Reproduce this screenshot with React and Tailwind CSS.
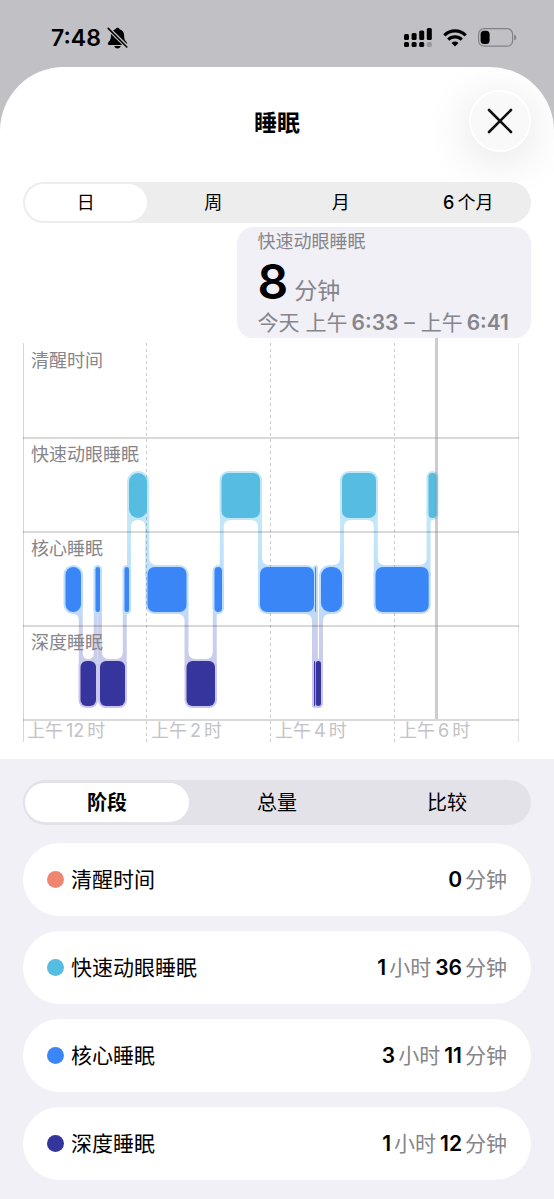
import { useState } from "react";
import clsx from "clsx";

const RANGES = ["日", "周", "月", "6个月"];
const VIEWS = ["阶段", "总量", "比较"];
const ROWS = ["清醒时间", "快速动眼睡眠", "核心睡眠", "深度睡眠"];
const HOURS = [12, 2, 4, 6];

const STAGES = {
  rem: { top: 135, bottom: 180, color: "#56bce1" },
  core: { top: 229, bottom: 274, color: "#3b86f7" },
  deep: { top: 323, bottom: 368, color: "#36349d" },
};

// [stage, start, end] along the 496 unit wide time axis
const SEGMENTS = [
  ["core", 42.5, 58],
  ["deep", 57.5, 73],
  ["core", 72.5, 77],
  ["deep", 77, 102],
  ["core", 101.5, 106],
  ["rem", 106, 124],
  ["core", 124.5, 163.5],
  ["deep", 163.5, 192],
  ["core", 191.5, 199],
  ["rem", 198.5, 237],
  ["core", 237, 291],
  ["deep", 291, 292],
  ["core", 292, 293],
  ["deep", 292.7, 298],
  ["core", 298, 319],
  ["rem", 319, 353],
  ["core", 352.5, 405.7],
  ["rem", 405.5, 413.5],
];

const SUMMARY = [
  { label: "清醒时间", dot: "bg-[#f08672]", value: [[0, "分钟"]] },
  { label: "快速动眼睡眠", dot: "bg-[#56bce1]", value: [[1, "小时"], [36, "分钟"]] },
  { label: "核心睡眠", dot: "bg-[#3b86f7]", value: [[3, "小时"], [11, "分钟"]] },
  { label: "深度睡眠", dot: "bg-[#36349d]", value: [[1, "小时"], [12, "分钟"]] },
];

function StatusBar() {
  return (
    <div className="flex h-[67px] items-center justify-between pt-2 pr-[37px] pl-[51px]">
      <div className="flex items-center gap-[6px]">
        <span className="text-[23px] leading-7 font-semibold">7:48</span>
        <svg width="21" height="22" viewBox="0 0 21 22" aria-hidden="true">
          <path d="M10.500.8c-1 0-1.800.6-2.100 1.500C5.500 3.200 3.900 5.500 3.900 8.500c0 3.600-.7 4.700-1.900 6.100-.8.9-1.100 1.400-1.100 2.100 0 .8.6 1.400 1.600 1.400h16c1 0 1.600-.6 1.600-1.400 0-.7-.3-1.200-1.100-2.100-1.200-1.400-1.900-2.500-1.900-6.100 0-3-1.600-5.300-4.500-6.200C12.300 1.400 11.500.8 10.500.8z" />
          <path d="M7.300 19h6.400c-.3 1.500-1.500 2.500-3.200 2.500S7.600 20.500 7.300 19z" />
          <path d="M1 1.200l19 18.600" stroke="#c1c0c5" strokeWidth="4" />
          <path d="M1.200 1.400l18.600 18.600" stroke="#000" strokeWidth="1.600" strokeLinecap="round" />
        </svg>
      </div>
      <div className="flex items-center gap-[11px]">
        <svg width="28" height="20" viewBox="0 0 28 20" aria-hidden="true">
          <rect x="0" y="6" width="5" height="6" rx="1.500" />
          <rect x="7.600" y="5" width="5" height="7" rx="1.500" />
          <rect x="15.200" y="2.500" width="5" height="9.500" rx="1.500" />
          <rect x="22.800" y="0" width="5" height="12" rx="1.500" />
          <rect x="0" y="14" width="5" height="5" rx="1.500" />
          <rect x="7.600" y="14" width="5" height="5" rx="1.500" />
          <rect x="15.200" y="14" width="5" height="5" rx="1.500" />
          <rect x="22.800" y="14" width="5" height="5" rx="1.500" fill="#98979c" />
        </svg>
        <svg width="24" height="18" viewBox="0 0 24 18" fill="none" stroke="#000" strokeWidth="3.200" aria-hidden="true">
          <path d="M1.300 6.300a15.300 15.300 0 0 1 21.400 0" />
          <path d="M5.200 10.700a9.800 9.800 0 0 1 13.600 0" />
          <path d="M12 17.500l-3.500-3.500a5 5 0 0 1 7 0z" fill="#000" stroke="none" />
        </svg>
        <svg width="39" height="19" viewBox="0 0 39 19" aria-hidden="true">
          <rect x=".6" y=".6" width="34" height="17.600" rx="5.500" fill="none" stroke="#828187" strokeWidth="1.200" />
          <rect x="2.600" y="2.700" width="9" height="13.400" rx="3.600" />
          <path d="M36.200 6.500c1.300.5 2.100 1.600 2.100 2.900s-.8 2.400-2.100 2.900z" fill="#828187" />
        </svg>
      </div>
    </div>
  );
}

// Short segments are almost pill shaped, long ones only get soft corners
function cornerRadius([stage, start, end]) {
  const width = end - start;
  if (stage === "deep") return Math.min(6, width / 2);
  return Math.min(width < 24 ? 9 : 7, width / 2);
}

// Band joining two neighbouring segments, with a soft corner on each inner side
function connectorPath(prev, next) {
  const x = (prev[2] + next[1]) / 2;
  const down = STAGES[prev[0]].top < STAGES[next[0]].top;
  const upper = down ? prev : next;
  const lower = down ? next : prev;
  const y1 = STAGES[upper[0]].bottom;
  const y2 = STAGES[lower[0]].top;
  const radius = (seg) => Math.max(0, Math.min(7, (seg[2] - seg[1] - 4) / 2));
  const side = down ? -1 : 1;
  const ru = radius(upper);
  const rl = radius(lower);
  const a = x + side * 2;
  const b = x - side * 2;
  return (
    `M${x - 2} ${y1 - 9}H${x + 2}V${y2 + 9}H${x - 2}Z` +
    `M${a + side * ru} ${y1 + 2}Q${a} ${y1 + 2} ${a} ${y1 + 2 + ru}V${y1 - 1}H${a + side * ru}Z` +
    `M${b - side * rl} ${y2 - 2}Q${b} ${y2 - 2} ${b} ${y2 - 2 - rl}V${y2 + 1}H${b - side * rl}Z`
  );
}

function SleepChart() {
  return (
    <div className="relative mr-3 pt-[6px]">
      <svg
        className="absolute inset-0 h-full w-full overflow-visible"
        viewBox="0 0 496 404"
        preserveAspectRatio="none"
        role="img"
        aria-label="睡眠"
      >
        <defs>
          <linearGradient id="halo" gradientUnits="userSpaceOnUse" x1="0" y1="130" x2="0" y2="372">
            <stop offset="0" stopColor="#bde6f6" />
            <stop offset=".25" stopColor="#c3e7f8" />
            <stop offset=".42" stopColor="#bfdffb" />
            <stop offset=".58" stopColor="#bedcfc" />
            <stop offset=".66" stopColor="#cbd0ec" />
            <stop offset="1" stopColor="#c9c4ee" />
          </linearGradient>
        </defs>

        <g fill="url(#halo)">
          {SEGMENTS.map((seg) => (
            <rect
              key={seg[1]}
              x={seg[1] - 2}
              y={STAGES[seg[0]].top - 2}
              width={seg[2] - seg[1] + 4}
              height="49"
              rx={cornerRadius(seg) + 2}
            />
          ))}
          {SEGMENTS.slice(1).map((seg, i) => (
            <path key={seg[1]} d={connectorPath(SEGMENTS[i], seg)} />
          ))}
        </g>

        <g stroke="#000" strokeOpacity=".2">
          {[100, 194, 288, 382].map((y) => (
            <path key={y} d={`M0 ${y}H496`} strokeWidth="1.300" />
          ))}
          {[123.5, 247.5, 371.5].map((x) => (
            <path key={x} d={`M${x} 5V404`} strokeDasharray="3 3" />
          ))}
          <path d="M.5 5V404" strokeOpacity=".16" />
          <path d="M495.500 5V404" strokeOpacity=".1" />
        </g>

        {SEGMENTS.map((seg) => (
          <rect
            key={seg[1]}
            x={seg[1]}
            y={STAGES[seg[0]].top}
            width={seg[2] - seg[1]}
            height="45"
            rx={cornerRadius(seg)}
            fill={STAGES[seg[0]].color}
          />
        ))}
        <path d="M413.500 0V381" stroke="#8e8e96" strokeOpacity=".45" strokeWidth="3" />
      </svg>

      {ROWS.map((row) => (
        <div key={row} className="relative h-[94px] pl-2 text-[18px] leading-[34px] text-[#85858a]">
          {row}
        </div>
      ))}
      <div className="relative grid grid-cols-4 text-[18px] leading-[22px] text-[#c2c2c7]">
        {HOURS.map((hour) => (
          <div key={hour} className="pl-1 whitespace-nowrap">
            上午<span className="mx-[3px]">{hour}</span>时
          </div>
        ))}
      </div>
    </div>
  );
}

export default function App() {
  const [range, setRange] = useState("日");
  const [view, setView] = useState("阶段");

  return (
    <div className="flex min-h-screen flex-col bg-[#c1c0c5] font-['Inter','Noto_Sans_CJK_SC',sans-serif] text-black">
      <StatusBar />
      <main className="flex flex-1 flex-col overflow-hidden rounded-t-[64px] bg-white">
        <div className="px-[23px] pb-[17px]">
          <header className="grid h-[115px] grid-cols-[1fr_auto_1fr] items-center pb-[7px]">
            <h1 className="col-start-2 pt-1 text-[23px] leading-8 font-bold">睡眠</h1>
            <button
              type="button"
              aria-label="关闭"
              className="flex size-[62px] items-center justify-center justify-self-end rounded-full border-2 border-white bg-[#f9f9f9] shadow-[0_8px_48px_rgba(0,0,0,0.12)]"
            >
              <svg width="26" height="26" viewBox="0 0 26 26" fill="none" stroke="#111" strokeWidth="2.600" strokeLinecap="round">
                <path d="M2 2l22 22M24 2L2 24" />
              </svg>
            </button>
          </header>

          <div className="relative grid h-[41px] grid-cols-4 gap-[6px] rounded-full bg-[#ededee] p-[2px]">
            {RANGES.map((item) => (
              <button
                key={item}
                type="button"
                aria-pressed={range === item}
                onClick={() => setRange(item)}
                className={clsx("rounded-full text-[18px] leading-6", range === item && "bg-white")}
              >
                {item === "6个月" ? <><span className="mr-[3px] font-medium">6</span>个月</> : item}
              </button>
            ))}
          </div>

          <div className="mt-1 ml-auto w-fit rounded-2xl bg-[#f1f0f6] pr-[22px] pl-[21px] text-[#85858a]">
            <div className="text-[18px] leading-[30px]">快速动眼睡眠</div>
            <div className="flex h-[50px] items-baseline gap-[6px] leading-[50px]">
              <span className="text-[48px] font-semibold text-black">8</span>
              <span className="text-[23px]">分钟</span>
            </div>
            <div className="text-[21px] leading-[31px] whitespace-nowrap">
              今天 上午<span className="ml-1 font-semibold">6:33</span> – 上午
              <span className="ml-1 font-semibold">6:41</span>
            </div>
          </div>

          <SleepChart />
        </div>

        <section className="flex-1 bg-[#f1f0f6] px-[23px] pt-[21px] pb-[19px]">
          <div className="grid h-[45px] grid-cols-3 gap-[6px] rounded-full bg-[#e3e2e8] px-[2px] py-[3px]">
            {VIEWS.map((item) => (
              <button
                key={item}
                type="button"
                aria-pressed={view === item}
                onClick={() => setView(item)}
                className={clsx("rounded-full text-[20px] leading-6", view === item && "bg-white font-bold")}
              >
                {item}
              </button>
            ))}
          </div>

          <ul className="mt-[18px] flex flex-col gap-[15px]">
            {SUMMARY.map(({ label, dot, value }) => (
              <li key={label} className="flex h-[73px] items-center rounded-full bg-white px-6 text-[21px] leading-8">
                <span className={clsx("mr-[7px] size-[17px] rounded-full", dot)} />
                <span>{label}</span>
                <span className="ml-auto flex gap-1">
                  {value.map(([amount, unit]) => (
                    <span key={unit} className="flex items-baseline gap-[3px]">
                      <span className="font-semibold">{amount}</span>
                      <span className="text-[#85858a]">{unit}</span>
                    </span>
                  ))}
                </span>
              </li>
            ))}
          </ul>
        </section>
      </main>
    </div>
  );
}
